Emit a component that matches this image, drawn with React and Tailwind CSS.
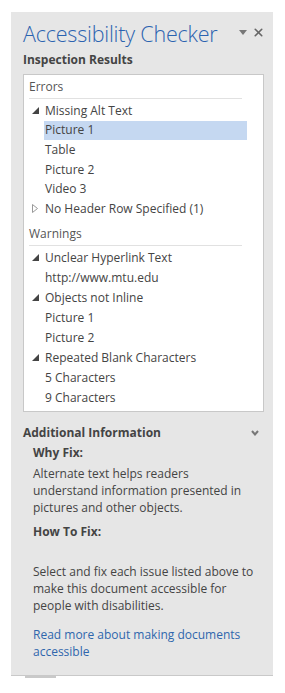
import { X } from 'lucide-react';

const font = { fontFamily: '"Open Sans", "Noto Sans", sans-serif' };

const Expanded = () => (
  <svg width="7" height="7" viewBox="0 0 7 7" className="shrink-0">
    <polygon points="7,0 7,7 0,7" fill="#444" />
  </svg>
);

const Collapsed = () => (
  <svg width="6" height="9" viewBox="0 0 6 9" className="shrink-0">
    <polygon points="0.5,0.5 5.5,4.5 0.5,8.5" fill="none" stroke="#999" strokeWidth="1" />
  </svg>
);

const Group = ({ title, open = true, children }) => (
  <>
    <div className="flex items-center h-[19.6px] pl-[6px]">
      <div className="w-[10px] flex justify-center">{open ? <Expanded /> : <Collapsed />}</div>
      <span className="ml-[5px] text-[12px] text-[#444] whitespace-nowrap">{title}</span>
    </div>
    {children}
  </>
);

const Item = ({ label, selected }) => (
  <div
    className={`flex items-center h-[19.6px] ml-[20px] w-[203px] pl-[1px] text-[12px] text-[#444] ${
      selected ? 'bg-[#c5d8f1]' : ''
    }`}
  >
    {label}
  </div>
);

const Section = ({ title }) => (
  <>
    <div className="h-[20px] flex items-center pl-[5px] text-[12px] text-[#555]">{title}</div>
    <div className="ml-[5px] w-[213px] h-px bg-[#e1e1e1] mt-[1px] mb-[2px]" />
  </>
);

export default function App() {
  return (
    <div className="w-[285px] h-[693px] bg-white pt-[12px] pl-[11px]" style={font}>
      <div className="w-[262px] h-[664px] bg-[#e6e6e6] border-b border-[#c9c9c9] relative">
        {/* header */}
        <div className="flex items-start justify-between pl-[12px] pr-[8px] pt-[8px]">
          <h1 className="text-[21.5px] font-light leading-[28px] text-[#2b63b0] tracking-[-0.2px]">
            Accessibility Checker
          </h1>
          <div className="flex items-center gap-[5px] mt-[6px] text-[#666]">
            <svg width="8" height="5" viewBox="0 0 8 5">
              <polygon points="0,0 8,0 4,5" fill="#777" />
            </svg>
            <X size={13} strokeWidth={3} color="#666" />
          </div>
        </div>
        <div className="pl-[12px] mt-[3px] text-[12px] font-bold text-[#444] leading-[18px]">
          Inspection Results
        </div>

        {/* results box */}
        <div className="ml-[12px] mt-[5px] w-[241px] h-[338px] bg-white border border-[#c8c8c8] pt-[2px]">
          <Section title="Errors" />
          <Group title="Missing Alt Text">
            <Item label="Picture 1" selected />
            <Item label="Table" />
            <Item label="Picture 2" />
            <Item label="Video 3" />
          </Group>
          <Group title="No Header Row Specified (1)" open={false} />
          <div className="h-[5px]" />
          <Section title="Warnings" />
          <div className="[&>div]:h-[20px]">
            <Group title="Unclear Hyperlink Text" />
            <Item label="http://www.mtu.edu" />
            <Group title="Objects not Inline" />
            <Item label="Picture 1" />
            <Item label="Picture 2" />
            <Group title="Repeated Blank Characters" />
            <Item label="5 Characters" />
            <Item label="9 Characters" />
          </div>
        </div>

        {/* additional info */}
        <div className="flex items-center justify-between pl-[12px] pr-[14px] mt-[12px]">
          <span className="text-[12px] font-bold text-[#444]">Additional Information</span>
          <svg width="8" height="6" viewBox="0 0 8 6">
            <polyline points="1,1 4,4.5 7,1" fill="none" stroke="#777" strokeWidth="2" />
          </svg>
        </div>
        <div className="pl-[22px] pr-[10px] text-[12px] text-[#444] leading-[17px]">
          <div className="font-bold mt-[2px]">Why Fix:</div>
          <p className="mt-[4px] w-[212px]">
            Alternate text helps readers understand information presented in pictures and other objects.
          </p>
          <div className="font-bold mt-[7px]">How To Fix:</div>
          <p className="mt-[23px]">
            Select and fix each issue listed above to make this document accessible for people with disabilities.
          </p>
          <p className="mt-[12px] text-[#2f66ad]">Read more about making documents accessible</p>
        </div>
        <div className="absolute left-[14px] -bottom-[3px] w-[31px] h-[2px] bg-[#c9c9c9]" />
      </div>
    </div>
  );
}
